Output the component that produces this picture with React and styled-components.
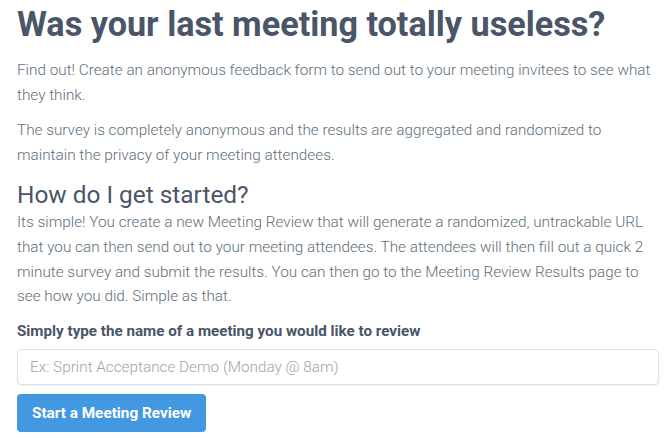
import React from 'react';
import styled, { createGlobalStyle } from 'styled-components';

const GlobalStyle = createGlobalStyle`
  html, body {
    margin: 0;
    padding: 0;
    background: #fff;
  }
  body {
    font-family: Roboto, "Liberation Sans", sans-serif;
    color: #4a5568;
  }
`;

const Page = styled.main`
  padding: 0 10px 0 17px;
`;

const Title = styled.h1`
  margin: 0;
  padding-top: 2px;
  font-size: 34.2px;
  line-height: 44px;
  font-weight: 700;
  color: #4a5568;
`;

const Text = styled.p`
  margin: ${({ $top = 0 }) => $top}px 0 0;
  font-size: 15.3px;
  line-height: 24.6px;
  font-weight: 300;
  color: #606f7b;
`;

const SubTitle = styled.h2`
  margin: 13px 0 0;
  font-size: 24.4px;
  line-height: 30px;
  font-weight: 400;
  color: #4a5568;
`;

const Form = styled.form`
  margin-top: 12px;
  display: flex;
  flex-direction: column;
  align-items: flex-start;
`;

const Label = styled.label`
  font-size: 15.2px;
  line-height: 20px;
  font-weight: 700;
  color: #4a5568;
`;

const Input = styled.input`
  box-sizing: border-box;
  margin-top: 8px;
  width: 642px;
  height: 36px;
  padding: 0 12px;
  border: 1px solid #dae1e7;
  border-radius: 4px;
  box-shadow: 0 1px 2px rgba(0, 0, 0, 0.06);
  font-family: inherit;
  font-size: 15.3px;
  font-weight: 300;
  color: #4a5568;
  &::placeholder {
    color: #9aa5b1;
  }
`;

const Button = styled.button`
  margin-top: 9px;
  height: 38px;
  padding: 0 15px;
  border: none;
  border-radius: 4px;
  background: #4299e1;
  color: #fff;
  font-family: inherit;
  font-size: 15.3px;
  font-weight: 700;
  cursor: pointer;
`;

export default function App() {
  return (
    <>
      <GlobalStyle />
      <Page>
        <Title>Was your last meeting totally useless?</Title>
        <Text $top={12}>
          Find out! Create an anonymous feedback form to send out to your meeting invitees to see what
          they think.
        </Text>
        <Text $top={11}>
          The survey is completely anonymous and the results are aggregated and randomized to
          maintain the privacy of your meeting attendees.
        </Text>
        <SubTitle>How do I get started?</SubTitle>
        <Text>
          Its simple! You create a new Meeting Review that will generate a randomized, untrackable URL
          that you can then send out to your meeting attendees. The attendees will then fill out a quick 2
          minute survey and submit the results. You can then go to the Meeting Review Results page to
          see how you did. Simple as that.
        </Text>
        <Form onSubmit={(e) => e.preventDefault()}>
          <Label htmlFor="meeting">Simply type the name of a meeting you would like to review</Label>
          <Input id="meeting" placeholder="Ex: Sprint Acceptance Demo (Monday @ 8am)" />
          <Button type="submit">Start a Meeting Review</Button>
        </Form>
      </Page>
    </>
  );
}
